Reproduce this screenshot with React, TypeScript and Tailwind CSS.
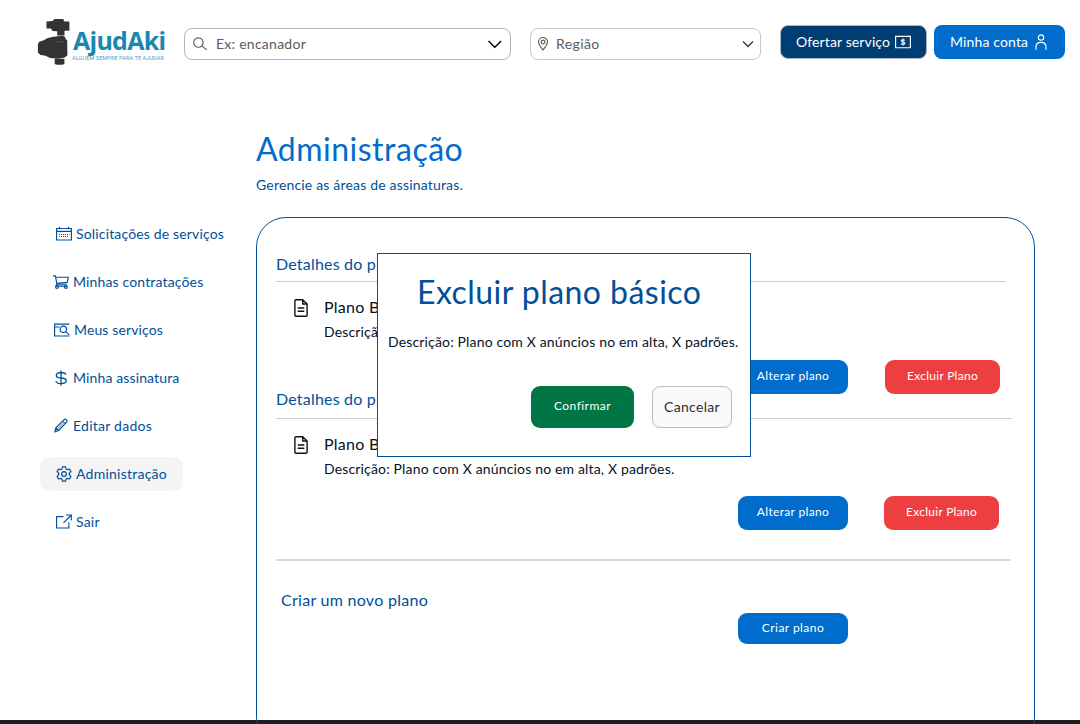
import React from "react";

type IconProps = { className?: string; children: React.ReactNode; box?: string };

function Icon({ className = "", children, box = "0 0 16 16" }: IconProps) {
  return (
    <svg viewBox={box} className={"shrink-0 " + className} fill="none" stroke="currentColor" strokeWidth="1.15">
      {children}
    </svg>
  );
}

const CalendarIcon = () => (
  <Icon className="h-4 w-4">
    <path d="M.6 2.500h14.800v11.500H.6zM.6 5.300h14.800M3.500.8v2.400M12.500.8v2.400" />
    <path d="M3 8.500h10.500M3 10.500h9" strokeWidth="1" strokeDasharray="1 1" />
  </Icon>
);

const CartIcon = () => (
  <Icon className="h-4 w-4">
    <path d="M0 1.800h2.400l1.500 8.400h10M2.700 3.200h12.600l-1.100 5.200-10.600.8M3.900 10.200l-1 1.900h10.600" />
    <circle cx="4" cy="13" r="1.4" />
    <circle cx="12.9" cy="13" r="1.4" />
  </Icon>
);

const WorkSearchIcon = () => (
  <Icon className="h-4 w-4">
    <path d="M15.400 2.100H.6v11.900h14.800M.6 5h5" />
    <circle cx="9.3" cy="7.3" r="3.2" />
    <path d="m11.600 9.600 3.700 3.300" />
  </Icon>
);

const DollarIcon = () => (
  <Icon className="h-4 w-4">
    <path
      d="M7 .6v14.800M12 4.700C11.600 3.200 10 2.500 7.200 2.500c-3 0-4.900 1-4.900 2.700S3.800 7.800 7 8c3.500.2 5.200 1 5.200 2.800s-2 2.800-5.100 2.800c-3 0-4.800-.9-5.200-2.500"
      strokeWidth="1.3"
    />
  </Icon>
);

const PencilIcon = () => (
  <Icon className="h-4 w-4">
    <path
      d="m.9 14 .9-4L9.900 1.900c.8-.8 1.900-.8 2.600-.1s.7 1.800-.1 2.600L4.600 12.500zM8.700 3.200l2.600 2.600M1.800 10l2.800 2.500"
      strokeLinejoin="round"
    />
    <path d="m4.300 10.200 5-5" strokeWidth=".8" />
  </Icon>
);

const GearIcon = () => (
  <Icon className="h-4 w-4" box="0 0 24 24">
    <g strokeWidth="1.8" strokeLinejoin="round">
      <path d="M9.700 1.200h4.600l.7 3.200 1.900 1.100 3.200-1 2.300 4-2.500 2.300v2.400l2.500 2.300-2.300 4-3.200-1-1.900 1.100-.7 3.200H9.700L9 19.600l-1.900-1.100-3.200 1-2.300-4 2.500-2.300v-2.400L1.600 8.500l2.300-4 3.200 1L9 4.400z" />
      <circle cx="12" cy="12" r="3.5" />
    </g>
  </Icon>
);

const ExitIcon = () => (
  <Icon className="h-4 w-4">
    <path d="M7.500 2.600H.6v11.400h12.300V8.500M10 1h5.300v5.300M15.300 1 7.500 8.800" />
  </Icon>
);

const FileIcon = () => (
  <svg viewBox="0 0 14 20" className="mt-px h-5 w-3.5 shrink-0" fill="none" stroke="#111" strokeWidth="1.4" strokeLinejoin="round">
    <path d="M8.700 1.700H1.900c-.6 0-1 .4-1 1v14.600c0 .6.400 1 1 1h10.200c.6 0 1-.4 1-1V6zM8.700 1.700V6h4.400M3.700 10h6.600M3.700 13.200h6.600" />
  </svg>
);

const menu = [
  { label: "Solicitações de serviços", icon: <CalendarIcon />, style: "pl-4 gap-1 tracking-[0.16px]" },
  { label: "Minhas contratações", icon: <CartIcon />, style: "pl-[13px] gap-1 tracking-[0.15px]" },
  { label: "Meus serviços", icon: <WorkSearchIcon />, style: "pl-3.5 gap-1 tracking-[0.13px]" },
  { label: "Minha assinatura", icon: <DollarIcon />, style: "pl-3.5 gap-[3px] tracking-[0.13px]" },
  { label: "Editar dados", icon: <PencilIcon />, style: "pl-3.5 gap-[3px] tracking-[0.25px]" },
  { label: "Administração", icon: <GearIcon />, style: "pl-4 gap-1 tracking-[0.24px] w-[143px] rounded-[9px] bg-[#f4f4f4]" },
  { label: "Sair", icon: <ExitIcon />, style: "pl-4 gap-1 tracking-[0.2px]" },
];

function Logo() {
  return (
    <div className="flex h-12 w-[132px] shrink-0">
      <svg viewBox="0 0 34 48" className="h-12 w-[34px] shrink-0" fill="#333335">
        <path d="M9.500 3.500 15.500 3l2-2h8.700l1.200 2.400h5v9.300h-4.900v4.800h-7.300v-4.200l-4.600-.4-1.700-2.400H9.500z" />
        <path d="m16.500 18.700 8.700-.9 2.800.9.600 2.200 1.600 1.300.2 15-2.600 2.400-7.200 1.200-7.400-.8-5.400-2.400-4.400-.7L.9 34.500v-8.600l1.300-2.100 4-1.200 4.600-2.600z" />
        <path d="M17.700 40.800h9.700v5.200l-2.200.8h-5.300l-2.200-.8z" />
        <path d="m19.700 24.500 2.500-1 4.600.6" fill="none" stroke="#777" strokeWidth=".6" />
      </svg>
      <div className="flex flex-col pt-[9px]">
        <span className="ml-0.5 font-['Open_Sans'] text-[25px] leading-[26px] font-bold tracking-[-0.75px] whitespace-nowrap text-[#1b86b0]">AjudAki</span>
        <span className="mt-px ml-px font-['Roboto'] text-[5.7px] leading-[8px] whitespace-nowrap text-[#569fbe]">ALGUÉM SEMPRE PARA TE AJUDAR</span>
      </div>
    </div>
  );
}

function Header() {
  return (
    <header className="flex h-[66px] items-start pt-[18px] pl-[37px]">
      <Logo />
      <div className="mt-2.5 ml-[15px] flex h-8 w-[327px] items-center rounded-lg border border-[#b5b5b5] pr-[7px] pl-2 text-[#5b5b5b]">
        <Icon className="h-4 w-4">
          <circle cx="5.4" cy="6.500" r="4.700" />
          <path d="m8.900 9.900 4.900 4" />
        </Icon>
        <span className="ml-[7px] grow text-sm tracking-[0.26px]">Ex: encanador</span>
        <Icon className="h-4 w-4 text-black">
          <path d="m1.500 4.900 6.300 6.300 6.300-6.300" strokeWidth="1.4" />
        </Icon>
      </div>
      <div className="mt-2.5 ml-[19px] flex h-8 w-[231px] items-center rounded-lg border border-[#c8c8c8] pr-1 pl-1 text-[#5b5b5b]">
        <Icon className="h-4 w-4">
          <path d="M8 14C5.500 10.900 3.500 8.500 3.500 6a4.500 4.500 0 0 1 9 0c0 2.500-2 4.900-4.500 8z" />
          <circle cx="8" cy="6" r="1.9" />
        </Icon>
        <span className="ml-[5px] grow text-sm tracking-[0.4px]">Região</span>
        <Icon className="h-4 w-4 text-[#333]">
          <path d="m3 5.500 5 5 5-5" strokeWidth="1.3" />
        </Icon>
      </div>
      <button className="mt-[7px] ml-[19px] flex h-[34px] w-[147px] items-center rounded-lg border border-[#a9b5c0] bg-[#003d73] pl-[15px] text-sm tracking-[0.12px] text-white">
        Ofertar serviço
        <Icon className="ml-[5px] h-4 w-4">
          <path d="M.6 2.300h14.800v11.400H.6z" />
          <path d="M9.800 6.500c-.3-.6-1-.8-1.800-.8-1 0-1.700.4-1.700 1.100 0 1.600 3.600.7 3.600 2.400 0 .7-.8 1.100-1.900 1.100-1 0-1.600-.3-1.900-.9M8 4.600v6.800" />
        </Icon>
      </button>
      <button className="mt-[7px] ml-[7px] flex h-[34px] w-[131px] items-center rounded-lg bg-[#006ccb] pl-4 text-sm tracking-[0.14px] text-white">
        Minha conta
        <Icon className="ml-[5px] h-4 w-4">
          <circle cx="8" cy="3.5" r="2.7" />
          <path d="M3 15.800v-2.500c0-2.900 2-4.900 5-4.900s5 2 5 4.900v2.500" />
        </Icon>
      </button>
    </header>
  );
}

function PlanInfo() {
  return (
    <div className="flex pl-[18px]">
      <FileIcon />
      <div className="ml-4 flex flex-col whitespace-nowrap text-[#06121f]">
        <span className="text-base leading-5 tracking-[0.25px]">Plano Básico</span>
        <span className="mt-[5px] text-sm leading-5 tracking-[0.16px]">Descrição: Plano com X anúncios no em alta, X padrões.</span>
      </div>
    </div>
  );
}

function PlanButtons({ gap }: { gap: string }) {
  return (
    <div className={"flex pl-[462px] text-xs text-white " + gap}>
      <button className="h-[34px] w-[110px] rounded-[9px] bg-[#006ccb] pb-0.5 tracking-[0.33px]">Alterar plano</button>
      <button className="h-[34px] w-[115px] rounded-[9px] bg-[#ed3e42] pb-0.5 tracking-[0.28px]">Excluir Plano</button>
    </div>
  );
}

function Panel() {
  return (
    <section className="mt-[22px] flex h-[530px] w-[779px] shrink-0 flex-col rounded-[30px] border border-[#004f98] pl-[19px] text-[#004f98]">
      <h2 className="mt-9 text-base leading-5 tracking-[0.2px]">Detalhes do plano</h2>
      <div className="mt-[7px] mb-[15px] h-px w-[730px] bg-[#cbcbcb]" />
      <PlanInfo />
      <div className="mt-[18px]"><PlanButtons gap="gap-[37px]" /></div>
      <h2 className="mt-[-5px] h-5 w-40 text-base leading-5 tracking-[0.2px]">Detalhes do plano</h2>
      <div className="mt-[9px] mb-[15px] h-px w-[736px] bg-[#cbcbcb]" />
      <PlanInfo />
      <div className="mt-[17px]"><PlanButtons gap="gap-9" /></div>
      <div className="mt-[29px] h-0.5 w-[735px] bg-[#d9d9d9]" />
      <div className="flex">
        <h2 className="mt-[29px] ml-[5px] w-[457px] text-base leading-5 tracking-[0.28px]">Criar um novo plano</h2>
        <button className="mt-[52px] h-[31px] w-[110px] rounded-[9px] bg-[#006ccb] pb-0.5 text-xs tracking-[0.45px] text-white">Criar plano</button>
      </div>
    </section>
  );
}

function DeleteDialog() {
  return (
    <div role="dialog" className="absolute top-[253px] left-[377px] flex h-[204px] w-[374px] flex-col border border-[#004f98] bg-white">
      <h2 className="mt-[18px] ml-[39px] text-[32px] leading-10 tracking-[0.45px] whitespace-nowrap text-[#004f98]">Excluir plano básico</h2>
      <p className="mt-5 ml-2.5 text-sm leading-5 tracking-[0.16px] whitespace-nowrap text-[#06121f]">Descrição: Plano com X anúncios no em alta, X padrões.</p>
      <div className="mt-[34px] flex justify-end gap-[18px] pr-[18px]">
        <button className="h-[42px] w-[103px] rounded-[9px] bg-[#007645] pb-0.5 text-xs tracking-[0.45px] text-white">Confirmar</button>
        <button className="h-[42px] w-20 rounded-lg border border-[#bebebe] bg-[#fafafa] text-sm tracking-[0.3px] text-[#2e2e2e]">Cancelar</button>
      </div>
    </div>
  );
}

export default function App() {
  return (
    <div className="relative h-[724px] w-[1080px] overflow-hidden bg-white font-['Lato',sans-serif]">
      <div className="absolute bottom-0 left-0 h-1 w-full bg-[#1c1b1f]" />
      <Header />
      <div className="relative flex">
        <nav className="flex w-64 shrink-0 flex-col gap-3.5 pt-[151px] pl-10 text-[#004f98]">
          {menu.map((item) => (
            <a key={item.label} className={"flex h-[34px] items-center text-sm whitespace-nowrap " + item.style}>
              {item.icon}
              {item.label}
            </a>
          ))}
        </nav>
        <main className="flex flex-col pt-[63px]">
          <h1 className="text-[32px] leading-10 tracking-[0.5px] text-[#006ccb]">Administração</h1>
          <p className="mt-1.5 text-sm leading-5 tracking-[0.18px] text-[#004f98]">Gerencie as áreas de assinaturas.</p>
          <Panel />
        </main>
      </div>
      <DeleteDialog />
    </div>
  );
}
